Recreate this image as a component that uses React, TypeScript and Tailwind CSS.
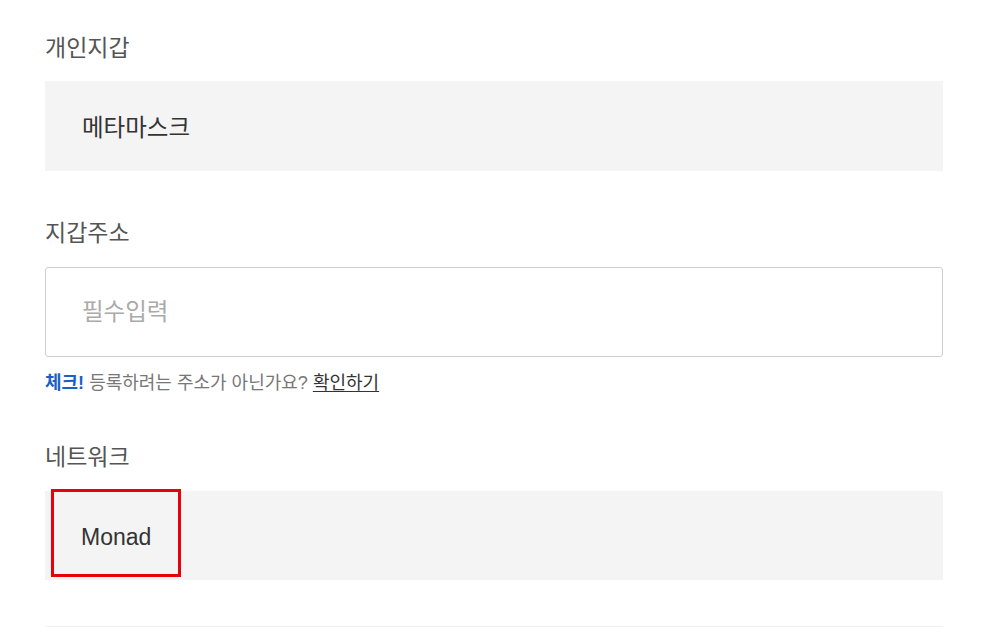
import React from 'react';

const FONT = '"Liberation Sans", "Noto Sans CJK KR", sans-serif';

export default function App() {
  return (
    <div className="min-h-[627px] bg-white" style={{ fontFamily: FONT }}>
      <div className="ml-[45px] w-[898px] pt-[31px]">
        {/* 개인지갑 */}
        <div className="h-[30px] leading-[30px] pt-[2px] text-[23px] text-[#555]">개인지갑</div>
        <div className="mt-5 h-[90px] bg-[#f4f4f4] flex items-center pl-[37px] pt-[6px] text-[23.5px] text-[#333]">
          메타마스크
        </div>

        {/* 지갑주소 */}
        <div className="mt-[46px] h-[30px] leading-[30px] pt-[1px] text-[23px] text-[#555]">지갑주소</div>
        <div className="mt-5 h-[90px] border border-[#cfcfcf] rounded-[3px] flex items-center pl-[36px] pt-[2px]">
          <input
            className="w-full outline-none bg-transparent text-[23.5px] text-[#333] placeholder:text-[#aaa]"
            style={{ fontFamily: FONT }}
            placeholder="필수입력"
          />
        </div>
        <div className="mt-4 h-5 leading-5 text-[18px] text-[#777]">
          <span className="font-bold text-[#1a5fc4]">체크!</span> 등록하려는 주소가 아닌가요?{' '}
          <span className="text-[#333] underline underline-offset-2">확인하기</span>
        </div>

        {/* 네트워크 */}
        <div className="mt-[48px] h-[30px] leading-[30px] pt-[1px] text-[23px] text-[#555]">네트워크</div>
        <div className="relative mt-5 h-[89px] bg-[#f4f4f4] flex items-center pl-[36px] pt-[4px] text-[23px] text-[#333]">
          Monad
          <div className="absolute left-[6px] top-[-2px] w-[130px] h-[88px] border-[3px] border-[#e8000b]" />
        </div>

        <div className="mt-[46px] h-px bg-[#eeeeee]" />
      </div>
    </div>
  );
}
